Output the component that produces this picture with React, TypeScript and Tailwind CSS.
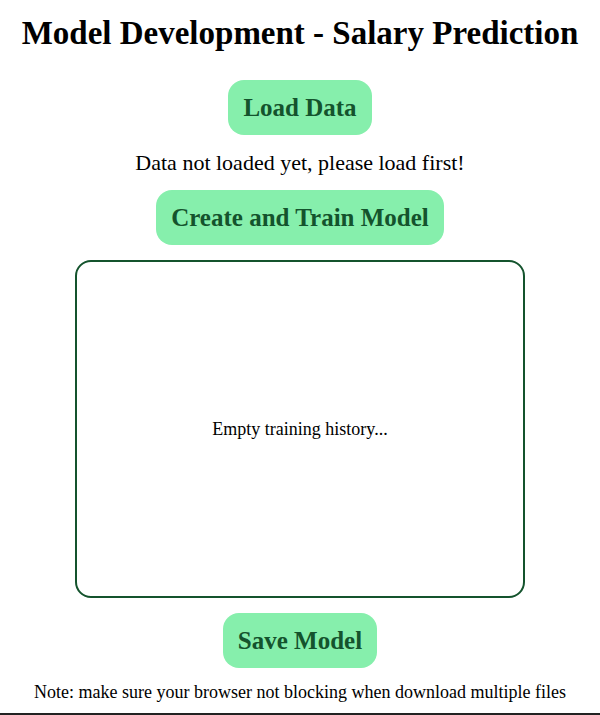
export default function App() {
  return (
    <div
      className="flex h-[715px] flex-col items-center bg-white text-black border-b-2 border-[#222]"
      style={{ fontFamily: "'Liberation Serif', 'Times New Roman', serif" }}
    >
      <h1 className="mt-[11px] text-[33px] font-bold leading-[44px]">
        Model Development - Salary Prediction
      </h1>
      <button className="mt-[25px] h-[55px] rounded-2xl bg-[#86efac] px-[15px] text-[25px] font-bold text-[#14532d]">
        Load Data
      </button>
      <p className="mt-[14px] text-[22px] leading-[28px]">Data not loaded yet, please load first!</p>
      <button className="mt-[13px] h-[55px] rounded-2xl bg-[#86efac] px-[15px] text-[25px] font-bold text-[#14532d]">
        Create and Train Model
      </button>
      <div className="mt-[15px] flex h-[338px] w-[450px] items-center justify-center rounded-2xl border-2 border-[#14532d] text-[18px]">
        Empty training history...
      </div>
      <button className="mt-[15px] h-[55px] rounded-2xl bg-[#86efac] px-[15px] text-[25px] font-bold text-[#14532d]">
        Save Model
      </button>
      <p className="mt-[11px] text-[18px] leading-[26px]">
        Note: make sure your browser not blocking when download multiple files
      </p>
    </div>
  );
}
